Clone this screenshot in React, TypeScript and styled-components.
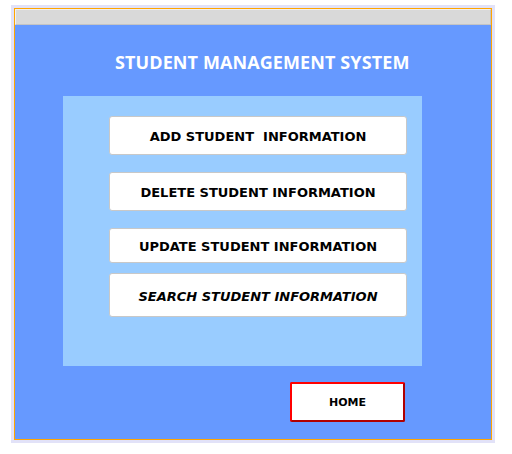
import React from 'react'
import styled, { createGlobalStyle } from 'styled-components'

const GlobalStyle = createGlobalStyle`
  html, body {
    margin: 0;
    padding: 0;
    background: #ffffff;
  }
  body {
    font-family: 'DejaVu Sans', Verdana, sans-serif;
  }
`

const Page = styled.div`
  padding: 5px 0 0 11px;
`

const Frame = styled.div`
  width: 478px;
  height: 432px;
  background: #e2e2f8;
  padding: 3px;
`

const Window = styled.div`
  height: 100%;
  border: 1px solid #ffa500;
  box-sizing: border-box;
  display: flex;
  flex-direction: column;
`

const TitleBar = styled.div`
  height: 16px;
  box-sizing: border-box;
  background: #d9d9d9;
  border: 1px solid #c4c4c4;
  border-top-color: #f0f0f0;
  border-left-color: #f0f0f0;
`

const Body = styled.div`
  flex: 1;
  background: #6699ff;
  padding-top: 26px;
  display: flex;
  flex-direction: column;
  align-items: flex-start;
`

const Heading = styled.h1`
  margin: 0 0 0 100px;
  height: 20px;
  line-height: 22px;
  font-family: 'Open Sans', 'DejaVu Sans', sans-serif;
  font-size: 18px;
  letter-spacing: 0.1px;
  font-weight: 700;
  color: #ffffff;
  white-space: nowrap;
`

const Panel = styled.div`
  margin: 25px 0 0 48px;
  width: 359px;
  height: 270px;
  box-sizing: border-box;
  background: #99ccff;
  padding: 20px 0 0 46px;
  display: flex;
  flex-direction: column;
  align-items: flex-start;
`

const MenuButton = styled.button<{ $h: number; $gap: number; $italic?: boolean }>`
  width: 298px;
  height: ${p => p.$h}px;
  margin-bottom: ${p => p.$gap}px;
  background: #ffffff;
  border: 1px solid #c8c8c8;
  border-radius: 3px;
  box-shadow: inset 0 0 0 1px #ffffff;
  font-family: 'DejaVu Sans', Verdana, sans-serif;
  font-size: 13px;
  font-weight: 700;
  font-style: ${p => (p.$italic ? 'italic' : 'normal')};
  color: #000000;
  white-space: pre;
  padding: 2px 0 0;
  cursor: pointer;
`

const Footer = styled.div`
  margin: 16px 0 0 275px;
`

const HomeButton = styled.button`
  width: 115px;
  height: 40px;
  box-sizing: border-box;
  background: #ffffff;
  border: 2px solid #ff0000;
  border-right-color: #b00000;
  border-bottom-color: #b00000;
  border-radius: 2px;
  font-family: 'DejaVu Sans', Verdana, sans-serif;
  font-size: 11px;
  font-weight: 700;
  color: #000000;
  padding: 0;
  cursor: pointer;
`

const items = [
  { label: 'ADD STUDENT  INFORMATION', h: 39, gap: 17 },
  { label: 'DELETE STUDENT INFORMATION', h: 39, gap: 17 },
  { label: 'UPDATE STUDENT INFORMATION', h: 35, gap: 10 },
  { label: 'SEARCH STUDENT INFORMATION', h: 44, gap: 0, italic: true },
]

export default function App () {
  return (
    <>
      <GlobalStyle />
      <Page>
        <Frame>
          <Window>
            <TitleBar />
            <Body>
              <Heading>STUDENT MANAGEMENT SYSTEM</Heading>
              <Panel>
                {items.map(item => (
                  <MenuButton
                    key={item.label}
                    $h={item.h}
                    $gap={item.gap}
                    $italic={item.italic}
                  >
                    {item.label}
                  </MenuButton>
                ))}
              </Panel>
              <Footer>
                <HomeButton>HOME</HomeButton>
              </Footer>
            </Body>
          </Window>
        </Frame>
      </Page>
    </>
  )
}
